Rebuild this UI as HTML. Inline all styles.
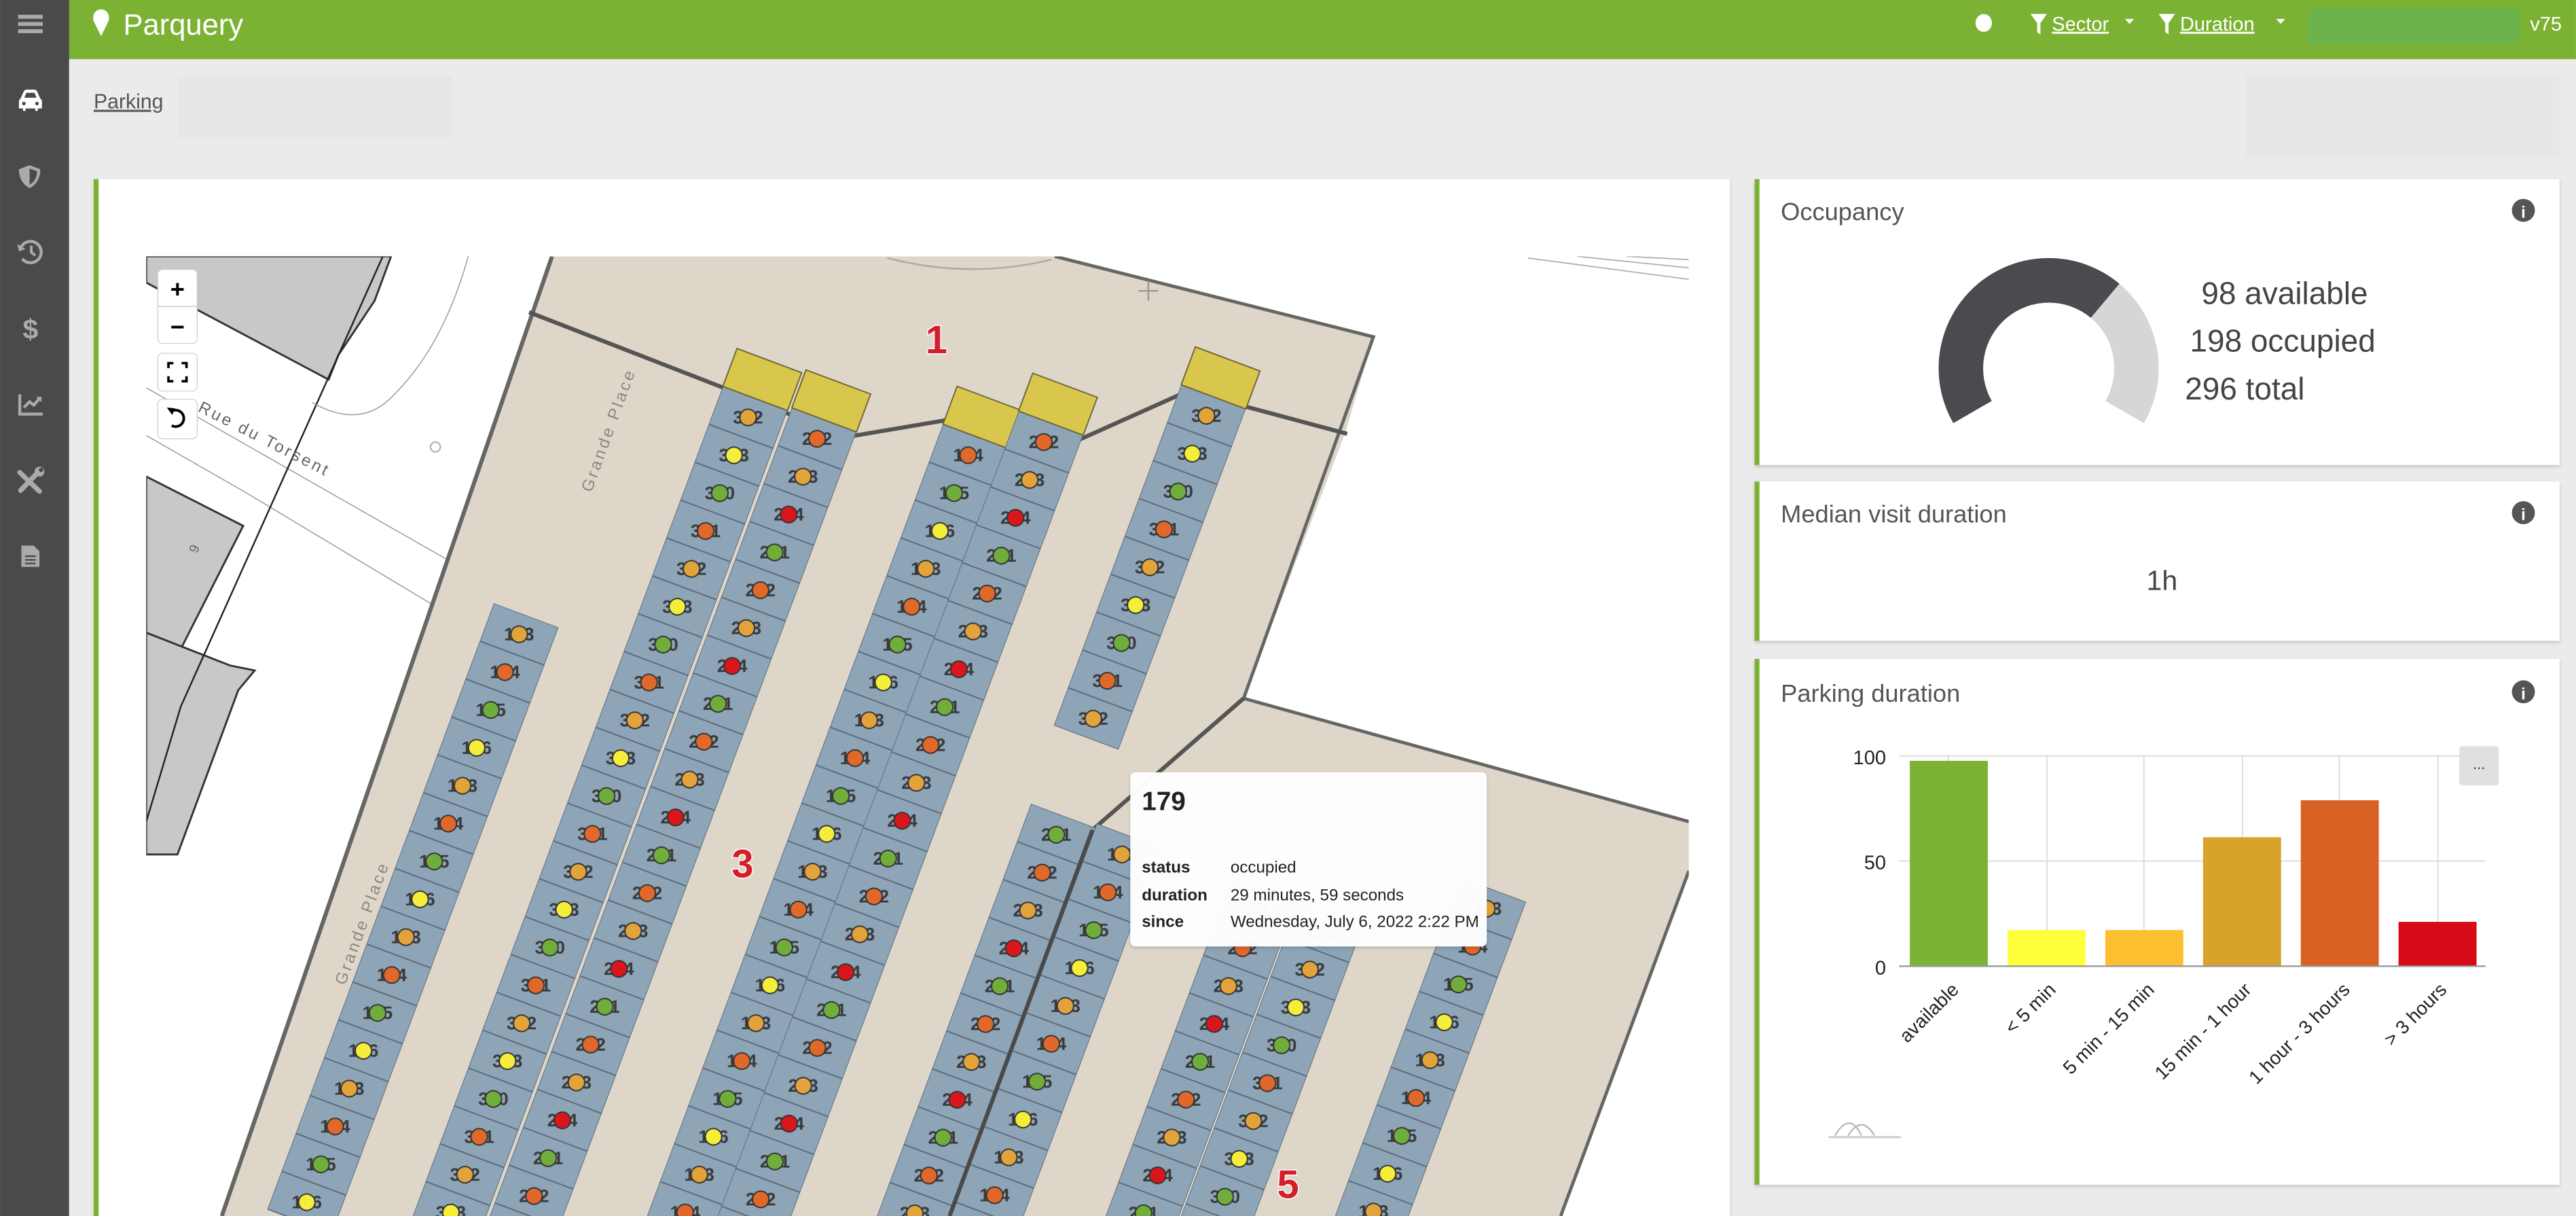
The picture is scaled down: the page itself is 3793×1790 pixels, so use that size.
<!DOCTYPE html>
<html><head><meta charset="utf-8"><style>
html,body{margin:0;padding:0;background:#ebebeb;width:3793px;height:1790px;overflow:hidden;}
svg{display:block;}
text{font-family:"Liberation Sans",sans-serif;}
</style></head><body>
<svg width="3793" height="1790" viewBox="0 0 1568 740" xmlns="http://www.w3.org/2000/svg">
<defs>
<clipPath id="mc"><rect x="89" y="156" width="939" height="584"/></clipPath>
<filter id="sh" x="-5%" y="-5%" width="110%" height="115%"><feDropShadow dx="0" dy="1" stdDeviation="1" flood-color="#000" flood-opacity="0.18"/></filter>
<g id="slot"><rect width="42" height="24.6" fill="#8ea4b7" stroke="#5d6d7c" stroke-width="0.8"/></g>
<pattern id="P1" patternUnits="userSpaceOnUse" width="42" height="98.4">
<use href="#slot"/><use href="#slot" y="24.6"/><use href="#slot" y="49.2"/><use href="#slot" y="73.8"/>
<g font-size="11" text-anchor="middle" fill="#3a3a3a" font-weight="bold">
<text x="21" y="16" transform="rotate(-20.5 21 12.3)">103</text>
<text x="21" y="40.6" transform="rotate(-20.5 21 36.9)">104</text>
<text x="21" y="65.2" transform="rotate(-20.5 21 61.5)">105</text>
<text x="21" y="89.8" transform="rotate(-20.5 21 86.1)">106</text></g>
<circle cx="21" cy="12.3" r="5" fill="#e2a33a" stroke="#333" stroke-width="0.8"/>
<circle cx="21" cy="36.9" r="5" fill="#e0682a" stroke="#333" stroke-width="0.8"/>
<circle cx="21" cy="61.5" r="5" fill="#6fae3a" stroke="#333" stroke-width="0.8"/>
<circle cx="21" cy="86.1" r="5" fill="#f4ee3a" stroke="#333" stroke-width="0.8"/>
</pattern>
<pattern id="P2" patternUnits="userSpaceOnUse" width="42" height="98.4">
<use href="#slot"/><use href="#slot" y="24.6"/><use href="#slot" y="49.2"/><use href="#slot" y="73.8"/>
<g font-size="11" text-anchor="middle" fill="#3a3a3a" font-weight="bold">
<text x="21" y="16" transform="rotate(-20.5 21 12.3)">201</text>
<text x="21" y="40.6" transform="rotate(-20.5 21 36.9)">202</text>
<text x="21" y="65.2" transform="rotate(-20.5 21 61.5)">203</text>
<text x="21" y="89.8" transform="rotate(-20.5 21 86.1)">204</text></g>
<circle cx="21" cy="12.3" r="5" fill="#6fae3a" stroke="#333" stroke-width="0.8"/>
<circle cx="21" cy="36.9" r="5" fill="#e0682a" stroke="#333" stroke-width="0.8"/>
<circle cx="21" cy="61.5" r="5" fill="#e2a33a" stroke="#333" stroke-width="0.8"/>
<circle cx="21" cy="86.1" r="5" fill="#d9161c" stroke="#333" stroke-width="0.8"/>
</pattern>
<pattern id="P3" patternUnits="userSpaceOnUse" width="42" height="98.4">
<use href="#slot"/><use href="#slot" y="24.6"/><use href="#slot" y="49.2"/><use href="#slot" y="73.8"/>
<g font-size="11" text-anchor="middle" fill="#3a3a3a" font-weight="bold">
<text x="21" y="16" transform="rotate(-20.5 21 12.3)">301</text>
<text x="21" y="40.6" transform="rotate(-20.5 21 36.9)">302</text>
<text x="21" y="65.2" transform="rotate(-20.5 21 61.5)">303</text>
<text x="21" y="89.8" transform="rotate(-20.5 21 86.1)">300</text></g>
<circle cx="21" cy="12.3" r="5" fill="#e0682a" stroke="#333" stroke-width="0.8"/>
<circle cx="21" cy="36.9" r="5" fill="#e2a33a" stroke="#333" stroke-width="0.8"/>
<circle cx="21" cy="61.5" r="5" fill="#f4ee3a" stroke="#333" stroke-width="0.8"/>
<circle cx="21" cy="86.1" r="5" fill="#6fae3a" stroke="#333" stroke-width="0.8"/>
</pattern>
<g id="yslot"><rect width="42" height="24.6" fill="#d9c64c" stroke="#6d6838" stroke-width="0.8"/></g>
</defs>

<rect width="1568" height="740" fill="#ebebeb"/>
<rect width="1568" height="36" fill="#7cb234"/>
<rect width="42" height="740" fill="#4a4a4a"/>
<rect x="11" y="9" width="15" height="2.4" fill="#aaa"/><rect x="11" y="13.4" width="15" height="2.4" fill="#aaa"/><rect x="11" y="17.8" width="15" height="2.4" fill="#aaa"/>
<path d="M12.5 60 L14.5 55.5 Q15 54.5 16.5 54.5 L20.5 54.5 Q22 54.5 22.5 55.5 L24.5 60 Q25.5 60.5 25.5 62 L25.5 66 L23 66 L23 67.5 L21.5 67.5 L21.5 66 L15.5 66 L15.5 67.5 L14 67.5 L14 66 L11.5 66 L11.5 62 Q11.5 60.5 12.5 60Z M14.8 59.5 L22.2 59.5 L21 56.5 L16 56.5Z" fill="#fff" fill-rule="evenodd"/>
<circle cx="14.5" cy="63" r="1.1" fill="#4a4a4a"/><circle cx="22.5" cy="63" r="1.1" fill="#4a4a4a"/>
<path d="M18 100.5 L24.5 103 Q24.5 111 18 114.5 Q11.5 111 11.5 103Z" fill="#aaa"/><path d="M18 102.5 L22.5 104.2 Q22.5 110 18 112.4Z" fill="#4a4a4a"/>
<path d="M12.5 151 A6.5 6.5 0 1 1 13.5 157.5" fill="none" stroke="#aaa" stroke-width="1.8"/><path d="M10.5 148.5 L11.5 153 L15.5 151.5Z" fill="#aaa"/><path d="M19 149.5 V153.5 L21.5 155.5" fill="none" stroke="#aaa" stroke-width="1.6"/>
<text x="18.5" y="206" font-size="17" font-weight="bold" fill="#aaa" text-anchor="middle">$</text>
<path d="M12 240 V252 H26" fill="none" stroke="#aaa" stroke-width="1.8"/><path d="M14.5 248 L18 244.5 L20.5 246.5 L24.5 242" fill="none" stroke="#aaa" stroke-width="1.8"/><path d="M22 241.5 H25.3 V244.8Z" fill="#aaa"/>
<path d="M12 287.5 L24 299" stroke="#aaa" stroke-width="3" stroke-linecap="round"/><path d="M24.5 286 L12.5 298.5" stroke="#aaa" stroke-width="3" stroke-linecap="round"/><circle cx="24" cy="287" r="3" fill="#aaa"/><circle cx="25" cy="286" r="1.3" fill="#4a4a4a"/>
<path d="M13 332 H20.5 L24 335.5 V345 H13Z" fill="#aaa"/><rect x="15.2" y="338" width="6.5" height="1" fill="#4a4a4a"/><rect x="15.2" y="340.2" width="6.5" height="1" fill="#4a4a4a"/><rect x="15.2" y="342.4" width="6.5" height="1" fill="#4a4a4a"/>

<path d="M61.5 22 L57.3 13.5 A4.8 4.8 0 1 1 65.7 13.5Z" fill="#fff"/><circle cx="61.5" cy="10.5" r="4.8" fill="#fff"/>
<text x="75" y="21" font-size="18" fill="#fff">Parquery</text>
<ellipse cx="1207.5" cy="14" rx="5" ry="5.4" fill="#fff"/>
<path d="M1236 8.5 H1246 L1242 14 V21 L1240 19.5 V14Z" fill="#fff"/>
<text x="1249" y="18.5" font-size="12" fill="#fff" text-decoration="underline">Sector</text>
<path d="M1293.5 11.5 H1299 L1296.25 14.5Z" fill="#fff"/>
<path d="M1314 8.5 H1324 L1320 14 V21 L1318 19.5 V14Z" fill="#fff"/>
<text x="1327" y="18.5" font-size="12" fill="#fff" text-decoration="underline">Duration</text>
<path d="M1385.5 11.5 H1391 L1388.25 14.5Z" fill="#fff"/>
<rect x="1405" y="5" width="129" height="22" fill="#6db34b"/>
<text x="1540" y="18.5" font-size="12" fill="#fff">v75</text>

<rect x="108" y="46" width="167" height="38" fill="#e7e7e7"/>
<rect x="1367" y="46" width="191" height="50" fill="#e7e7e7"/>
<text x="57" y="66" font-size="12.5" fill="#555" text-decoration="underline">Parking</text>

<rect x="57" y="109" width="996" height="631" fill="#fff" filter="url(#sh)"/>
<rect x="57" y="109" width="3" height="631" fill="#7cb234"/>

<g clip-path="url(#mc)">
<rect x="89" y="156" width="939" height="584" fill="#fff"/>
<path d="M89 156 H238 L228 183 L206 216 L200 231 L89 172Z" fill="#c8c8c8" stroke="#333" stroke-width="1.2"/>
<path d="M89 290 L148 320 L110 395 L89 385Z" fill="#c8c8c8" stroke="#333" stroke-width="1.2"/>
<path d="M89 385 L140 405 L155 408 L145 420 L108 520 L89 520Z" fill="#c8c8c8" stroke="#333" stroke-width="1.2"/>
<path d="M89 236 L280 345 L335 385" fill="none" stroke="#999" stroke-width="0.6"/>
<path d="M89 265 L150 300 L200 330 L300 390" fill="none" stroke="#999" stroke-width="0.6"/>
<path d="M233 156 L110 430 L89 500" fill="none" stroke="#222" stroke-width="1"/>
<path d="M285 156 Q270 210 240 240 Q220 262 190 245" fill="none" stroke="#999" stroke-width="0.6"/>
<circle cx="265" cy="272" r="3" fill="none" stroke="#aaa" stroke-width="0.8"/>
<path d="M930 157 L1028 170 M960 156 L1028 163 M990 156 L1028 158" stroke="#aaa" stroke-width="0.7"/>
<text x="120" y="250" font-size="10" fill="#666" letter-spacing="1.5" transform="rotate(27 120 250)">Rue du Torsent</text>
<text x="120" y="337" font-size="8" fill="#666" transform="rotate(-70 120 337)">9</text>
<path d="M336 156 H642 L836 205 L819 263 L757 425 L1028 500 V530 L950 740 H135Z" fill="#ddd6c9"/>
<path d="M336 156 L135 740" stroke="#666" stroke-width="2.5"/>
<path d="M642 156 L836 205 L757 425 L1028 500" fill="none" stroke="#666" stroke-width="2"/>
<path d="M1028 530 L950 740" stroke="#666" stroke-width="2"/>
<path d="M540 157 Q590 170 640 158" fill="none" stroke="#aaa" stroke-width="1"/>
<path d="M693 177 H705 M699 171 V183" stroke="#999" stroke-width="1"/>
<path d="M322 190 L443 237 L515 266 L580 255 L656 268 L723 238 L820 264" fill="none" stroke="#555" stroke-width="2.5"/>
<path d="M757 425 L665 505 L578 740" fill="none" stroke="#555" stroke-width="2.5"/>
<text x="360" y="300" font-size="10" fill="#8d887e" letter-spacing="1.5" transform="rotate(-70 360 300)">Grande Place</text>
<text x="210" y="600" font-size="10" fill="#8d887e" letter-spacing="1.5" transform="rotate(-70 210 600)">Grande Place</text>

<g transform="translate(300.6 367.1) rotate(20.5)"><rect width="42" height="394" fill="url(#P1)"/></g>
<g transform="translate(448.6 212.1) rotate(20.5)"><rect width="42" height="590" fill="url(#P3)"/><use href="#yslot"/></g>
<g transform="translate(490.6 225.1) rotate(20.5)"><rect width="42" height="590" fill="url(#P2)"/><use href="#yslot"/></g>
<g transform="translate(582.6 235.1) rotate(20.5)"><rect width="42" height="590" fill="url(#P1)"/><use href="#yslot"/></g>
<g transform="translate(628.6 227.1) rotate(20.5)"><rect width="42" height="590" fill="url(#P2)"/><use href="#yslot"/></g>
<g transform="translate(727.6 211.1) rotate(20.5)"><rect width="42" height="246" fill="url(#P3)"/><use href="#yslot"/></g>
<g transform="translate(627.6 489.1) rotate(20.5)"><rect width="42" height="295" fill="url(#P2)"/></g>
<g transform="translate(667.6 501.1) rotate(20.5)"><rect width="42" height="295" fill="url(#P1)"/></g>
<g transform="translate(749.6 535.1) rotate(20.5)"><rect width="42" height="246" fill="url(#P2)"/></g>
<g transform="translate(790.6 548.1) rotate(20.5)"><rect width="42" height="246" fill="url(#P3)"/></g>
<g transform="translate(889.6 534.1) rotate(20.5)"><rect width="42" height="246" fill="url(#P1)"/></g>
<path d="M665 505 L578 740" stroke="#4a4a4a" stroke-width="2.5"/>

<g font-size="24" font-weight="bold" fill="#d41f2a" stroke="#fff" stroke-width="1.2" paint-order="stroke" text-anchor="middle">
<text x="570" y="215">1</text>
<text x="452" y="534">3</text>
<text x="784" y="729">5</text>
</g>

<rect x="96" y="164" width="24" height="45" rx="3" fill="#fff" stroke="#ccc" stroke-width="0.5"/>
<line x1="96" y1="186.5" x2="120" y2="186.5" stroke="#ccc" stroke-width="0.6"/>
<text x="108" y="181" font-size="15" font-weight="bold" text-anchor="middle" fill="#000">+</text>
<text x="108" y="204" font-size="15" font-weight="bold" text-anchor="middle" fill="#000">−</text>
<rect x="96" y="215" width="24" height="23" rx="3" fill="#fff" stroke="#ccc" stroke-width="0.5"/>
<path d="M102.5 224 V221 H105.5 M110.5 221 H113.5 V224 M113.5 229 V232 H110.5 M105.5 232 H102.5 V229" fill="none" stroke="#000" stroke-width="1.5"/>
<rect x="96" y="243" width="24" height="24" rx="3" fill="#fff" stroke="#ccc" stroke-width="0.5"/>
<path d="M104 250.5 A5 5 0 1 1 104.5 259" fill="none" stroke="#000" stroke-width="1.6"/><path d="M101.5 248 L104.8 252.5 L106.5 248.5Z" fill="#000"/>

<rect x="688" y="470" width="217" height="106" rx="3" fill="#fff" fill-opacity="0.97" filter="url(#sh)"/>
<text x="695" y="493" font-size="16" font-weight="bold" fill="#222">179</text>
<text x="695" y="531" font-size="10" font-weight="bold" fill="#222">status</text>
<text x="749" y="531" font-size="10" fill="#222">occupied</text>
<text x="695" y="548" font-size="10" font-weight="bold" fill="#222">duration</text>
<text x="749" y="548" font-size="10" fill="#222">29 minutes, 59 seconds</text>
<text x="695" y="564" font-size="10" font-weight="bold" fill="#222">since</text>
<text x="749" y="564" font-size="10" fill="#222">Wednesday, July 6, 2022 2:22 PM</text>
</g>

<rect x="1068" y="109" width="490" height="174" fill="#fff" filter="url(#sh)"/>
<rect x="1068" y="109" width="3" height="174" fill="#7cb234"/>
<text x="1084" y="134" font-size="15" fill="#555">Occupancy</text>
<circle cx="1536" cy="128" r="7" fill="#555"/><text x="1536" y="132.5" font-size="10" font-weight="bold" fill="#fff" text-anchor="middle">i</text>
<path d="M1189 257.5 A67 67 0 0 1 1290.1 172.7 L1272.7 193.4 A40 40 0 0 0 1212.4 244Z" fill="#4a4b4f"/>
<path d="M1290.1 172.7 A67 67 0 0 1 1305 257.5 L1281.6 244 A40 40 0 0 0 1272.7 193.4Z" fill="#d6d6d6"/>
<text x="1340" y="185" font-size="19" fill="#444">98 available</text>
<text x="1333" y="214" font-size="19" fill="#444">198 occupied</text>
<text x="1330" y="243" font-size="19" fill="#444">296 total</text>

<rect x="1068" y="293" width="490" height="97" fill="#fff" filter="url(#sh)"/>
<rect x="1068" y="293" width="3" height="97" fill="#7cb234"/>
<text x="1084" y="318" font-size="15" fill="#555">Median visit duration</text>
<circle cx="1536" cy="312" r="7" fill="#555"/><text x="1536" y="316.5" font-size="10" font-weight="bold" fill="#fff" text-anchor="middle">i</text>
<text x="1316" y="359" font-size="17" fill="#444" text-anchor="middle">1h</text>

<rect x="1068" y="401" width="490" height="320" fill="#fff" filter="url(#sh)"/>
<rect x="1068" y="401" width="3" height="320" fill="#7cb234"/>
<text x="1084" y="427" font-size="15" fill="#555">Parking duration</text>
<circle cx="1536" cy="421" r="7" fill="#555"/><text x="1536" y="425.5" font-size="10" font-weight="bold" fill="#fff" text-anchor="middle">i</text>
<g stroke="#dcdcdc" stroke-width="0.8">
<line x1="1156" y1="460" x2="1513" y2="460"/><line x1="1156" y1="524" x2="1513" y2="524"/>
<line x1="1186" y1="460" x2="1186" y2="588"/><line x1="1246" y1="460" x2="1246" y2="588"/><line x1="1305" y1="460" x2="1305" y2="588"/><line x1="1365" y1="460" x2="1365" y2="588"/><line x1="1424" y1="460" x2="1424" y2="588"/><line x1="1484" y1="460" x2="1484" y2="588"/>
</g>
<rect x="1162.5" y="463" width="47.5" height="125" fill="#7db334"/>
<rect x="1222" y="566" width="47.5" height="22" fill="#ffff3b"/>
<rect x="1281.5" y="566" width="47.5" height="22" fill="#fcbf2f"/>
<rect x="1341" y="509.5" width="47.5" height="78.5" fill="#d9a22b"/>
<rect x="1400.5" y="487" width="47.5" height="101" fill="#d96123"/>
<rect x="1460" y="561" width="47.5" height="27" fill="#d70a17"/>
<line x1="1156" y1="588" x2="1513" y2="588" stroke="#999" stroke-width="1"/>
<text x="1148" y="465" font-size="12" fill="#222" text-anchor="end">100</text>
<text x="1148" y="529" font-size="12" fill="#222" text-anchor="end">50</text>
<text x="1148" y="593" font-size="12" fill="#222" text-anchor="end">0</text>
<rect x="1497" y="454" width="24" height="24" rx="2" fill="#e0e0e0"/>
<text x="1509" y="468" font-size="9" fill="#333" text-anchor="middle">...</text>
<g font-size="11.5" fill="#222" text-anchor="end">
<text transform="translate(1193 603) rotate(-45)">available</text>
<text transform="translate(1252 603) rotate(-45)">&lt; 5 min</text>
<text transform="translate(1312 603) rotate(-45)">5 min - 15 min</text>
<text transform="translate(1371 603) rotate(-45)">15 min - 1 hour</text>
<text transform="translate(1431 603) rotate(-45)">1 hour - 3 hours</text>
<text transform="translate(1490 603) rotate(-45)">&gt; 3 hours</text>
</g>
<path d="M1113 692 H1157" stroke="#ccc" stroke-width="1.2"/>
<path d="M1117 691 Q1126 676 1133 691 M1125 691 Q1133 678 1141 691" fill="none" stroke="#bbb" stroke-width="1"/>
</svg>
</body></html>
